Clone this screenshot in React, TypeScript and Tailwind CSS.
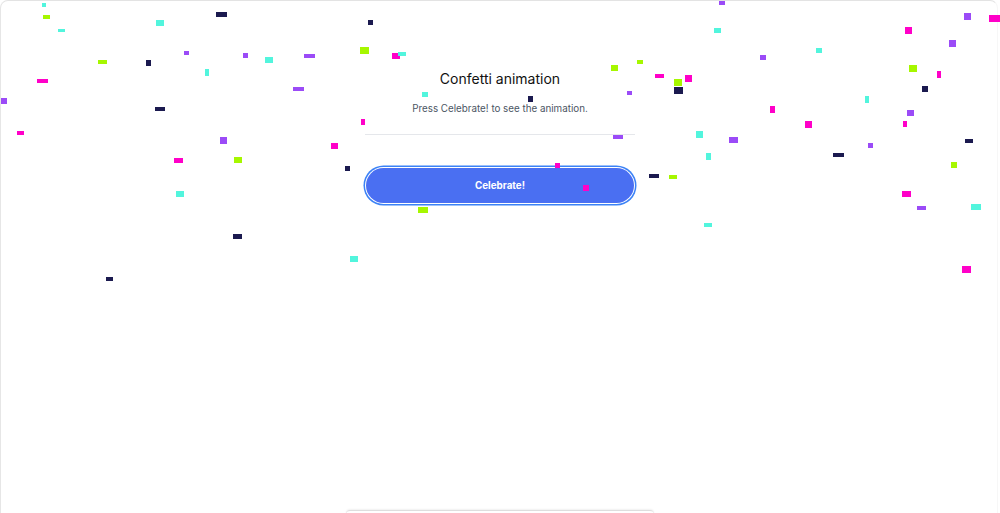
import React from "react";

type P = [number, number, number, number, string];

const C = "#52f5dd";
const L = "#a6f700";
const N = "#1b1a4f";
const M = "#ff00c8";
const U = "#9b4bf7";

const pieces: P[] = [
  [42, 3, 4, 4, C],
  [43, 15, 7, 4, L],
  [58, 29, 7, 3, C],
  [216, 12, 11, 5, N],
  [156, 20, 8, 6, C],
  [184, 51, 5, 4, U],
  [243, 53, 5, 5, U],
  [265, 57, 8, 6, C],
  [304, 54, 11, 4, U],
  [98, 60, 9, 4, L],
  [146, 60, 5, 6, N],
  [205, 69, 4, 7, C],
  [37, 79, 11, 4, M],
  [293, 87, 11, 4, U],
  [1, 98, 6, 6, U],
  [155, 107, 10, 4, N],
  [17, 131, 7, 4, M],
  [220, 137, 7, 7, U],
  [331, 143, 7, 6, M],
  [174, 158, 9, 5, M],
  [234, 157, 8, 6, L],
  [176, 191, 8, 6, C],
  [233, 234, 9, 5, N],
  [106, 277, 7, 4, N],
  [350, 256, 8, 6, C],
  [368, 20, 5, 5, N],
  [360, 47, 9, 7, L],
  [392, 53, 8, 6, M],
  [398, 52, 8, 4, C],
  [611, 65, 7, 6, L],
  [637, 60, 6, 4, L],
  [655, 74, 9, 4, M],
  [422, 92, 6, 5, C],
  [528, 96, 5, 6, N],
  [627, 91, 5, 4, U],
  [361, 119, 4, 6, M],
  [613, 135, 10, 4, U],
  [345, 166, 5, 5, N],
  [555, 163, 5, 5, M],
  [649, 174, 10, 4, N],
  [418, 207, 10, 6, L],
  [719, 1, 6, 4, U],
  [714, 28, 7, 5, C],
  [964, 13, 7, 7, U],
  [989, 15, 11, 7, M],
  [905, 27, 7, 7, M],
  [949, 40, 7, 7, U],
  [816, 48, 6, 5, C],
  [760, 55, 6, 5, U],
  [674, 79, 8, 7, L],
  [685, 75, 7, 7, M],
  [674, 87, 9, 7, N],
  [909, 65, 8, 7, L],
  [937, 71, 4, 7, M],
  [922, 86, 6, 6, N],
  [865, 96, 4, 7, C],
  [770, 106, 5, 7, M],
  [907, 110, 7, 6, U],
  [805, 121, 7, 7, M],
  [903, 121, 4, 6, M],
  [696, 131, 7, 7, C],
  [729, 137, 9, 6, U],
  [868, 143, 5, 5, U],
  [965, 139, 8, 4, N],
  [833, 153, 11, 4, N],
  [706, 153, 5, 7, C],
  [669, 175, 8, 4, L],
  [951, 162, 6, 6, L],
  [902, 191, 9, 6, M],
  [917, 206, 9, 4, U],
  [971, 204, 10, 6, C],
  [704, 223, 8, 4, C],
  [962, 266, 9, 7, M],
];

const overButton: P[] = [[583, 185, 6, 6, M]];

export default function App() {
  return (
    <div
      className="relative h-[513px] w-[1000px] overflow-hidden bg-white"
      style={{ fontFamily: "Inter, 'Noto Sans', sans-serif" }}
    >
      <div className="absolute left-0 top-0 h-[600px] w-[998px] rounded-lg border border-t-[#e3e3e3] border-l-[#e6e6e6] border-r-[#f7f7f7] border-b-transparent" />
      <div className="relative flex flex-col items-center pt-[69px]">
        <h1 className="text-[14px] leading-[19px] font-normal text-[#111111]">
          Confetti animation
        </h1>
        <p className="mt-[14px] text-[9.8px] leading-[14px] text-[#4b5563]">
          Press Celebrate! to see the animation.
        </p>
        <div className="mt-[18px] h-px w-[270px] bg-[#e5e7eb]" />
        <button className="mt-[33px] flex h-[35px] w-[268px] items-center justify-center rounded-full bg-[#4a6ff2] pt-px text-[9.8px] font-bold text-white ring-[1.5px] ring-[#3b82f6] ring-offset-1 ring-offset-white">
          Celebrate!
        </button>
        <div className="mt-[307px] h-[20px] w-[308px] rounded-t-sm border-t border-[#dedede] shadow-[0_-1px_2px_rgba(0,0,0,0.06)]" />
      </div>
      {pieces.concat(overButton).map(([x, y, w, h, c], i) => (
        <div
          key={i}
          className="absolute"
          style={{ left: x, top: y, width: w, height: h, backgroundColor: c }}
        />
      ))}
    </div>
  );
}
